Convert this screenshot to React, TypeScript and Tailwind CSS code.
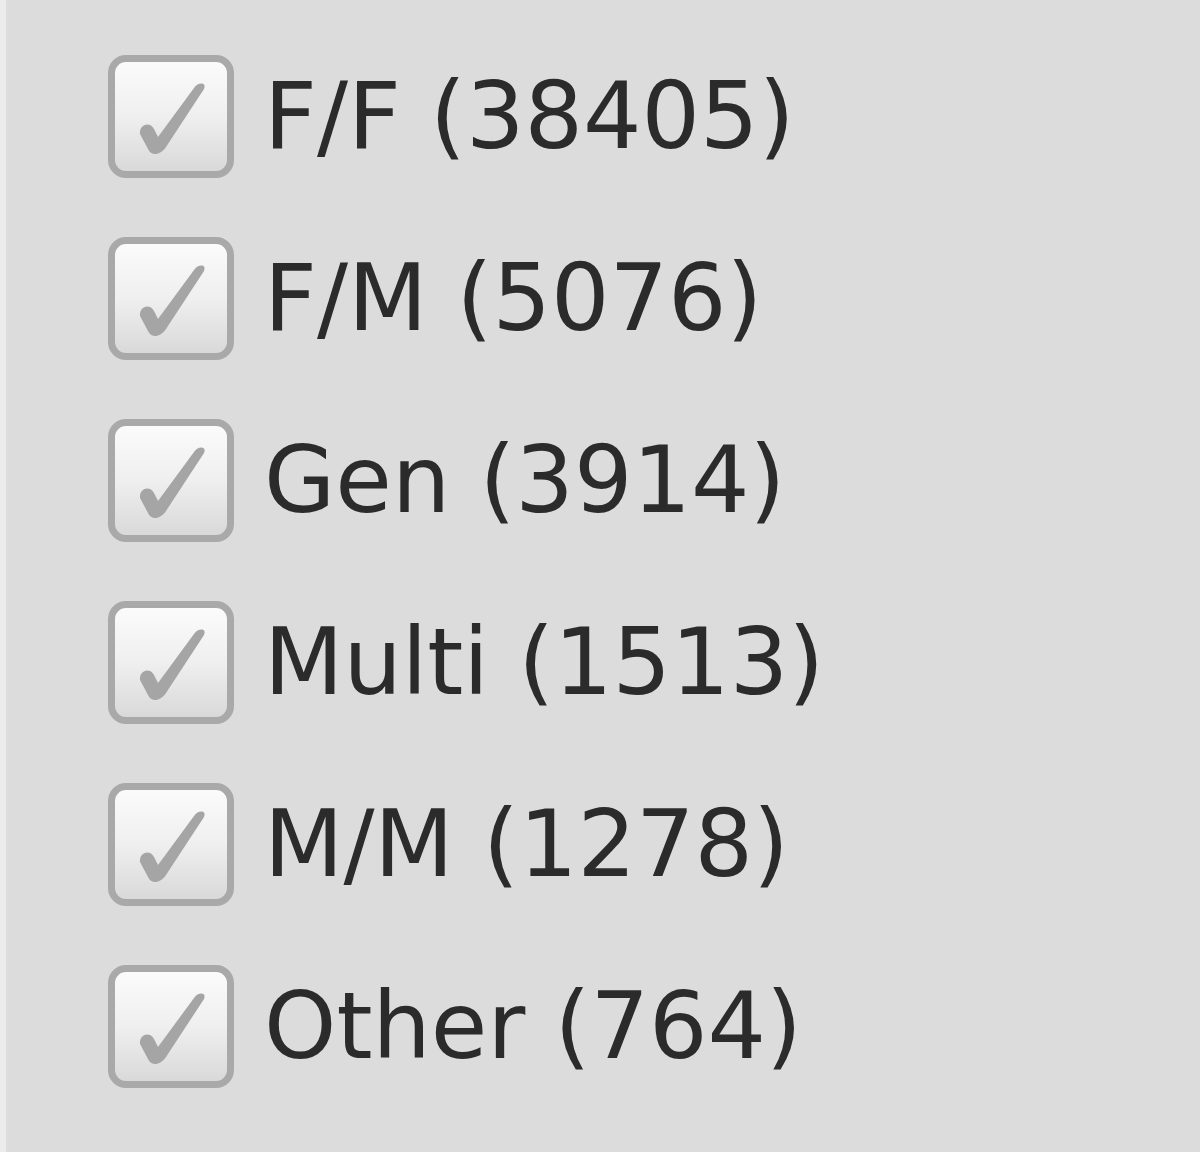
const rows = [
  { label: 'F/F', count: 38405 },
  { label: 'F/M', count: 5076 },
  { label: 'Gen', count: 3914 },
  { label: 'Multi', count: 1513 },
  { label: 'M/M', count: 1278 },
  { label: 'Other', count: 764 },
];

function CheckBox() {
  return (
    <div className="flex h-[123px] w-[126px] shrink-0 items-center justify-center rounded-[18px] border-[7px] border-[#a9a9a9] bg-gradient-to-b from-[#fbfbfb] via-[#efefef] to-[#d9d9d9]">
      <svg width="112" height="109" viewBox="7 7 112 109">
        <path
          d="M 32 79 C 31 69, 42 66, 46 74 L 50 82 L 86 33 C 90 27, 99 27, 96 34 L 58 92 C 52 101, 43 101, 40 94 Z"
          fill="#a5a5a5"
        />
      </svg>
    </div>
  );
}

export default function App() {
  return (
    <div className="flex min-h-[1152px] w-[1200px] bg-[#dcdcdc]">
      <div className="w-[6px] shrink-0 bg-[#ececec]" />
      <div className="flex flex-col gap-[59px] pl-[102px] pt-[55px]">
        {rows.map((r) => (
          <label key={r.label} className="flex h-[123px] items-center gap-[30px]">
            <CheckBox />
            <span
              className="text-[92px] leading-none text-[#2b2b2b]"
              style={{ fontFamily: '"DejaVu Sans", Verdana, sans-serif' }}
            >
              {r.label} ({r.count})
            </span>
          </label>
        ))}
      </div>
    </div>
  );
}
